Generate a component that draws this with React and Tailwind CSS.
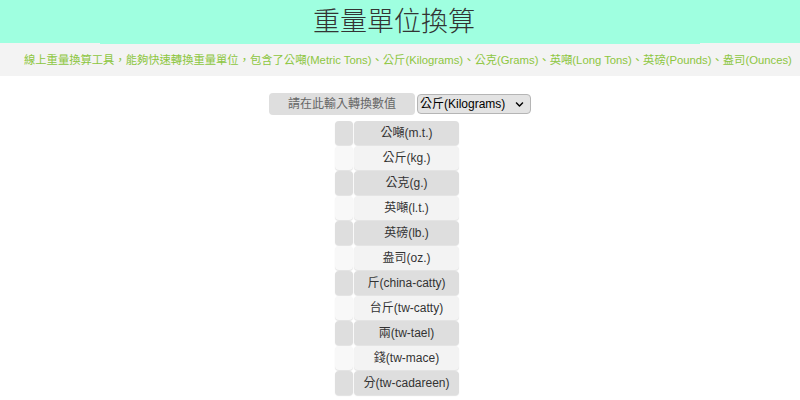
import { FaChevronDown } from "react-icons/fa";

const units = [
  "公噸(m.t.)",
  "公斤(kg.)",
  "公克(g.)",
  "英噸(l.t.)",
  "英磅(lb.)",
  "盎司(oz.)",
  "斤(china-catty)",
  "台斤(tw-catty)",
  "兩(tw-tael)",
  "錢(tw-mace)",
  "分(tw-cadareen)",
];

const font = "font-['Liberation_Sans','Noto_Sans_CJK_TC',sans-serif]";

export default function App() {
  return (
    <div className={`min-h-[400px] bg-white ${font}`}>
      {/* header */}
      <div className="h-[43px] bg-[#9fffe0]">
        <div className="relative mx-auto flex h-[44px] w-[600px] items-center justify-center bg-[#9fffe0] pr-[12px]">
          <h1 className="text-[27px] font-light leading-none text-[#333]">
            重量單位換算
          </h1>
        </div>
      </div>

      {/* description */}
      <div className="flex h-[33px] items-center bg-[#f3f3f3] pl-[24px] pt-px">
        <p className="whitespace-nowrap text-[11.3px] text-[#8dc63f]">
          線上重量換算工具，能夠快速轉換重量單位，包含了公噸(Metric Tons)、公斤(Kilograms)、公克(Grams)、英噸(Long Tons)、英磅(Pounds)、盎司(Ounces)
        </p>
      </div>

      {/* input row */}
      <div className="mt-[17px] flex items-center justify-center gap-[2px]">
        <input
          type="text"
          placeholder="請在此輸入轉換數值"
          className="h-[22px] w-[146px] rounded-[4px] bg-[#dedede] text-center text-[12px] text-[#333] outline-none placeholder:text-[#666]"
        />
        <div className="flex h-[20px] w-[114px] items-center justify-between rounded-[4px] border border-[#b5b5b5] bg-[#e3e3e3] pl-[2px] pr-[6px] text-[12px] text-black">
          <span>公斤(Kilograms)</span>
          <FaChevronDown className="text-[9px]" />
        </div>
      </div>

      {/* unit list */}
      <div className="mt-[6px] flex flex-col items-center gap-px pr-[6px]">
        {units.map((u, i) => {
          const dark = i % 2 === 0;
          return (
            <div key={u} className="flex h-[24px] gap-px">
              <div
                className={`w-[18px] rounded-[4px] shadow-[0_1px_1px_rgba(0,0,0,0.12)] ${
                  dark ? "bg-[#dedede]" : "bg-[#f8f8f8]"
                }`}
              />
              <div
                className={`flex w-[105px] items-center justify-center rounded-[4px] text-[12px] text-[#333] shadow-[0_1px_1px_rgba(0,0,0,0.12)] ${
                  dark ? "bg-[#dedede]" : "bg-[#f3f3f3]"
                }`}
              >
                {u}
              </div>
            </div>
          );
        })}
      </div>
    </div>
  );
}
